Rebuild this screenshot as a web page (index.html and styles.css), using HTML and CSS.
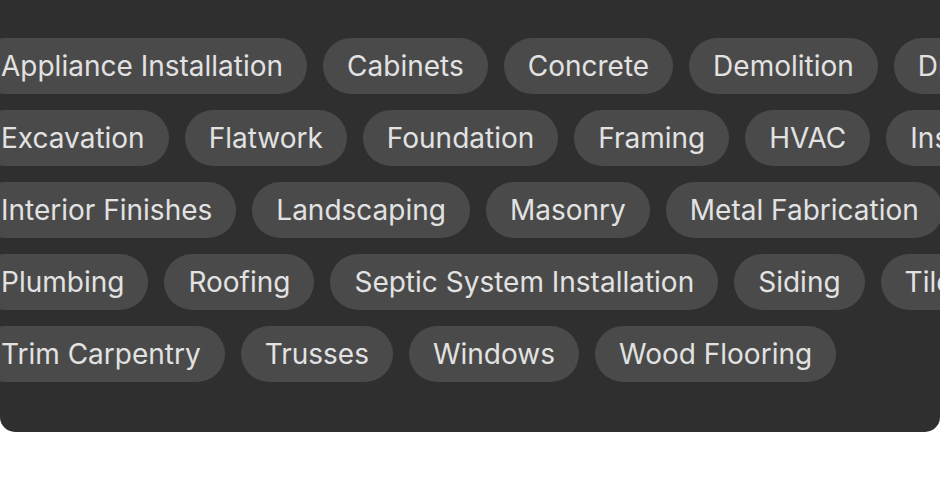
FILE: index.html
```html
<!DOCTYPE html>
<html lang="en">
<head>
  <meta charset="UTF-8">
  <title>Trades</title>
  <meta name="viewport" content="width=device-width, initial-scale=1.0">
  <link rel="stylesheet" href="styles.css">
</head>
<body>
  <div class="panel">
    <div class="tags">
      <div class="row">
        <span class="tag">Appliance Installation</span>
        <span class="tag">Cabinets</span>
        <span class="tag">Concrete</span>
        <span class="tag">Demolition</span>
        <span class="tag">Drywall</span>
      </div>
      <div class="row">
        <span class="tag">Excavation</span>
        <span class="tag">Flatwork</span>
        <span class="tag">Foundation</span>
        <span class="tag">Framing</span>
        <span class="tag">HVAC</span>
        <span class="tag">Insulation</span>
      </div>
      <div class="row">
        <span class="tag">Interior Finishes</span>
        <span class="tag">Landscaping</span>
        <span class="tag">Masonry</span>
        <span class="tag">Metal Fabrication</span>
        <span class="tag">Painting</span>
      </div>
      <div class="row">
        <span class="tag">Plumbing</span>
        <span class="tag">Roofing</span>
        <span class="tag">Septic System Installation</span>
        <span class="tag">Siding</span>
        <span class="tag">Tile</span>
      </div>
      <div class="row">
        <span class="tag">Trim Carpentry</span>
        <span class="tag">Trusses</span>
        <span class="tag">Windows</span>
        <span class="tag">Wood Flooring</span>
      </div>
    </div>
  </div>
</body>
</html>
```

FILE: styles.css
```css
body {
  margin: 0;
  padding: 0;
  background: #fff;
  font-family: Inter, "Noto Sans", sans-serif;
}

.panel {
  width: 940px;
  height: 432px;
  box-sizing: border-box;
  padding-top: 38px;
  background: #2f2f2f;
  border-radius: 0 0 15px 15px;
  overflow: hidden;
}

.tags {
  display: flex;
  flex-direction: column;
  gap: 16px;
  margin-left: -23px;
}

.row {
  display: flex;
  gap: 16px;
  white-space: nowrap;
}

.tag {
  flex: none;
  height: 56px;
  line-height: 56px;
  padding: 0 24px;
  border-radius: 28px;
  background: #4a4a4a;
  color: #e2e2e2;
  font-size: 28px;
}
```
